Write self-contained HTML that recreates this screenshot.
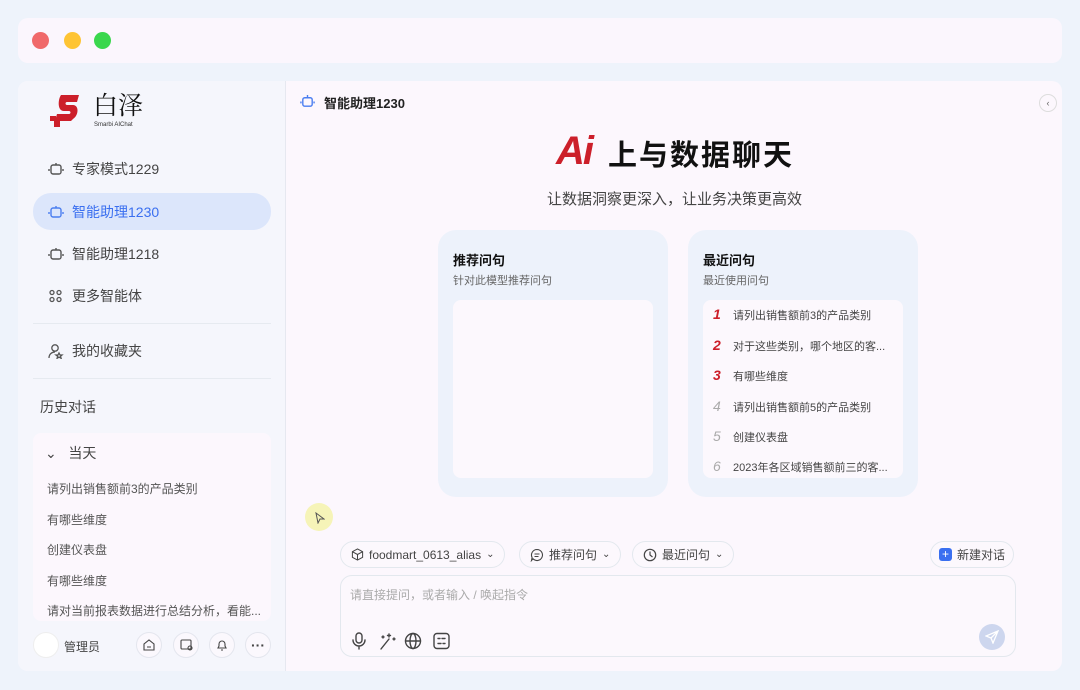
<!DOCTYPE html><html><head><meta charset="utf-8"><style>
*{box-sizing:border-box;margin:0;padding:0}
body{width:1080px;height:690px;background:#eef3fb;font-family:"Liberation Sans","Noto Sans CJK SC",sans-serif;position:relative;overflow:hidden;color:#333}
.abs{position:absolute}
.top{left:18px;top:18px;width:1044px;height:45px;background:#fbf6fd;border-radius:10px}
.dot{width:17px;height:17px;border-radius:50%;top:14px}
.win{left:18px;top:81px;width:1044px;height:590px;background:#fcf7fd;border-radius:10px;overflow:hidden}
.side{left:0;top:0;width:268px;height:590px;background:#f5f6fc;border-right:1px solid #e6e8f0}
.nav{left:15px;width:238px;height:37px;border-radius:18px;font-size:14px;color:#444;display:flex;align-items:center;padding-left:15px}
.nav svg{margin-right:8px}
.sep{left:15px;width:238px;height:1px;background:#e6eaf0}
.hist{left:15px;top:352px;width:238px;height:188px;background:#fcf7fd;border-radius:8px}
.hi{left:14px;font-size:12px;color:#555}
.ib{width:26px;height:26px;border-radius:50%;border:1px solid #e4e6ee;background:#fbf8fd;top:551px;display:flex;align-items:center;justify-content:center}
.card{top:149px;width:230px;height:267px;border-radius:18px;background:#edf2fb}
.card h3{position:absolute;left:15px;top:20px;font-size:13px;color:#111}
.card p{position:absolute;left:15px;top:42px;font-size:11px;color:#666}
.inner{left:15px;top:70px;width:200px;background:#fcf8fd;border-radius:8px}
.q{left:10px;font-size:11px;color:#444;white-space:nowrap}
.q i{display:inline-block;width:20px;font-style:italic;font-weight:bold;font-size:14px;color:#cc1f2a}
.q i.g{color:#aaa;font-weight:normal}
.pill{top:460px;height:27px;border:1px solid #e3e8ee;border-radius:14px;background:#fcf8fd;font-size:12px;color:#444;display:flex;align-items:center;padding:0 10px;gap:5px}
</style></head><body>
<div class="abs top">
<div class="abs dot" style="left:14px;background:#f0696a"></div>
<div class="abs dot" style="left:46px;background:#fec434"></div>
<div class="abs dot" style="left:76px;background:#3ad74d"></div>
</div>
<div class="abs win">
<div class="abs side">
 <div class="abs" style="left:30px;top:11px;width:42px;height:38px">
  <svg width="42" height="38" viewBox="0 0 40 38"><path d="M12 3h18l-2 7H18c-2 0-2 3 0 3h6c6 0 6 10 0 14l-2 2H6l2-7h12c2 0 2-3 0-3h-5c-7 0-6-12-3-16z" fill="#cc1f2a"/><rect x="1" y="24" width="6" height="5" fill="#cc1f2a"/><rect x="5" y="29" width="6" height="6" fill="#cc1f2a"/></svg>
 </div>
 <div class="abs" style="left:75px;top:8px;font-size:25px;color:#111;font-family:'Noto Serif CJK SC',serif;line-height:30px">白泽</div>
 <div class="abs" style="left:76px;top:41px;font-size:6px;color:#333">Smarbi AIChat</div>
 <div class="abs nav" style="top:69px"><svg width="16" height="14" viewBox="0 0 16 14" fill="none" stroke="#555" stroke-width="1.4"><rect x="3" y="3" width="10" height="9" rx="2"/><path d="M1 7v2M15 7v2M8 1v2"/></svg>专家模式1229</div>
 <div class="abs nav" style="top:112px;background:#dce6fb;color:#3a6ff0"><svg width="16" height="14" viewBox="0 0 16 14" fill="none" stroke="#4a7ef0" stroke-width="1.4"><rect x="3" y="3" width="10" height="9" rx="2"/><path d="M1 7v2M15 7v2M8 1v2"/></svg>智能助理1230</div>
 <div class="abs nav" style="top:154px"><svg width="16" height="14" viewBox="0 0 16 14" fill="none" stroke="#555" stroke-width="1.4"><rect x="3" y="3" width="10" height="9" rx="2"/><path d="M1 7v2M15 7v2M8 1v2"/></svg>智能助理1218</div>
 <div class="abs nav" style="top:196px"><svg width="16" height="14" viewBox="0 0 16 14" fill="none" stroke="#555" stroke-width="1.3"><circle cx="4" cy="3.5" r="2"/><circle cx="11" cy="3.5" r="2"/><circle cx="4" cy="10.5" r="2"/><circle cx="11" cy="10.5" r="2"/></svg>更多智能体</div>
 <div class="abs sep" style="top:242px"></div>
 <div class="abs nav" style="top:251px"><svg width="16" height="16" viewBox="0 0 16 16" fill="none" stroke="#555" stroke-width="1.3"><circle cx="7" cy="5" r="3.2"/><path d="M1 15c0-4 3-6 6-6M11 10l1 2h2l-1.5 1.3.6 2-2-1.2-2 1.2.6-2L8 12h2z"/></svg>我的收藏夹</div>
 <div class="abs sep" style="top:297px"></div>
 <div class="abs" style="left:22px;top:316px;font-size:14px;color:#444">历史对话</div>
 <div class="abs hist">
  <div class="abs" style="left:12px;top:10px;font-size:14px;color:#444">⌄&nbsp;&nbsp; 当天</div>
  <div class="abs hi" style="top:47px">请列出销售额前3的产品类别</div>
  <div class="abs hi" style="top:78px">有哪些维度</div>
  <div class="abs hi" style="top:108px">创建仪表盘</div>
  <div class="abs hi" style="top:139px">有哪些维度</div>
  <div class="abs hi" style="top:169px">请对当前报表数据进行总结分析，看能...</div>
 </div>
 <div class="abs" style="left:15px;top:551px;width:26px;height:26px;border-radius:50%;background:#fff;border:1px solid #eee"></div>
 <div class="abs" style="left:46px;top:557px;font-size:12px;color:#444">管理员</div>
 <div class="abs ib" style="left:118px"><svg width="12" height="12" viewBox="0 0 12 12" fill="none" stroke="#444" stroke-width="1.1"><path d="M1 11V5l5-4 5 4v6zM4 8h4"/></svg></div>
 <div class="abs ib" style="left:155px"><svg width="13" height="12" viewBox="0 0 13 12" fill="none" stroke="#444" stroke-width="1.1"><rect x="1" y="1" width="10" height="9" rx="1"/><circle cx="10" cy="9" r="2"/></svg></div>
 <div class="abs ib" style="left:191px"><svg width="12" height="12" viewBox="0 0 12 12" fill="none" stroke="#444" stroke-width="1.1"><path d="M2 9h8L9 7V5a3 3 0 0 0-6 0v2zM5 11h2"/></svg></div>
 <div class="abs ib" style="left:227px;font-size:14px;font-weight:bold;color:#444">···</div>
</div>
<div class="abs" style="left:282px;top:13px"><svg width="15" height="15" viewBox="0 0 16 16" fill="none" stroke="#4a7ef0" stroke-width="1.5"><rect x="3" y="4" width="10" height="9" rx="2"/><path d="M1 8v2M15 8v2M8 1v3"/></svg></div>
<div class="abs" style="left:306px;top:12px;font-size:13px;font-weight:bold;color:#222">智能助理1230</div>
<div class="abs" style="left:1021px;top:13px;width:18px;height:18px;border-radius:50%;border:1px solid #ddd;font-size:9px;text-align:center;line-height:16px;color:#666">‹</div>
<div class="abs" style="left:538px;top:47px;font-size:40px;font-weight:bold;font-style:italic;color:#cc1f2a;letter-spacing:-2px;line-height:46px">Ai</div>
<div class="abs" style="left:590px;top:55px;font-size:29px;font-weight:bold;color:#111;letter-spacing:2px;line-height:40px">上与数据聊天</div>
<div class="abs" style="left:529px;top:107px;font-size:15px;color:#444">让数据洞察更深入，让业务决策更高效</div>
<div class="abs card" style="left:420px"><h3>推荐问句</h3><p>针对此模型推荐问句</p><div class="abs inner" style="height:178px"></div></div>
<div class="abs card" style="left:670px"><h3>最近问句</h3><p>最近使用问句</p>
 <div class="abs inner" style="height:178px">
  <div class="abs q" style="top:6px"><i>1</i>请列出销售额前3的产品类别</div>
  <div class="abs q" style="top:37px"><i>2</i>对于这些类别，哪个地区的客...</div>
  <div class="abs q" style="top:67px"><i>3</i>有哪些维度</div>
  <div class="abs q" style="top:98px"><i class="g">4</i>请列出销售额前5的产品类别</div>
  <div class="abs q" style="top:128px"><i class="g">5</i>创建仪表盘</div>
  <div class="abs q" style="top:158px"><i class="g">6</i>2023年各区域销售额前三的客...</div>
 </div></div>
<div class="abs" style="left:287px;top:422px;width:28px;height:28px;border-radius:50%;background:#f6f4b8"></div>
<div class="abs" style="left:297px;top:430px"><svg width="10" height="12" viewBox="0 0 10 12" fill="none" stroke="#555" stroke-width="1"><path d="M1 1l8 6H5l-2 4z"/></svg></div>
<div class="abs pill" style="left:322px"><svg width="13" height="13" viewBox="0 0 14 14" fill="none" stroke="#444" stroke-width="1.1"><path d="M7 1l5.5 3v6L7 13 1.5 10V4zM1.5 4L7 7l5.5-3M7 7v6"/></svg>foodmart_0613_alias <span style="font-size:10px">⌄</span></div>
<div class="abs pill" style="left:501px"><svg width="14" height="14" viewBox="0 0 14 14" fill="none" stroke="#444" stroke-width="1.1"><path d="M7 1.5a5.5 5.5 0 1 1-4 9.3L1.5 12.5l.6-3A5.5 5.5 0 0 1 7 1.5zM4.5 6h5M4.5 8.5h4"/></svg>推荐问句 <span style="font-size:10px">⌄</span></div>
<div class="abs pill" style="left:614px"><svg width="14" height="14" viewBox="0 0 14 14" fill="none" stroke="#444" stroke-width="1.2"><circle cx="7" cy="7" r="5.7"/><path d="M7 3.5V7l2.5 2"/></svg>最近问句 <span style="font-size:10px">⌄</span></div>
<div class="abs pill" style="left:912px;padding:0 8px"><span style="display:inline-block;width:13px;height:13px;background:#3a6ff0;border-radius:3px;color:#fff;font-size:12px;line-height:13px;text-align:center">+</span>新建对话</div>
<div class="abs" style="left:322px;top:494px;width:676px;height:82px;border:1px solid #e3e8ee;border-radius:12px;background:#fcf8fd">
 <div class="abs" style="left:9px;top:10px;font-size:12px;color:#aaa">请直接提问，或者输入 / 唤起指令</div>
 <svg class="abs" style="left:10px;top:56px" width="112" height="18" viewBox="0 0 112 18" fill="none" stroke="#444" stroke-width="1.4" stroke-linecap="round">
  <rect x="5" y="1" width="6" height="10" rx="3"/><path d="M2 8a6 6 0 0 0 12 0M8 14v3"/>
  <path d="M30 17l8-10M38 2v3M36.5 3.5h3M43 6v2M42 7h2M32 4v2M31 5h2"/>
  <circle cx="62" cy="9" r="7.5"/><ellipse cx="62" cy="9" rx="3" ry="7.5"/><path d="M54.5 9h15"/>
  <rect x="83" y="1.5" width="15" height="15" rx="3"/><path d="M87 6.5h2M91 6.5h3M87 11.5h3M92 11.5h2"/>
 </svg>
 <div class="abs" style="left:638px;top:48px;width:26px;height:26px;border-radius:50%;background:#cdd6ee"><svg class="abs" style="left:6px;top:6px" width="14" height="14" viewBox="0 0 14 14" fill="none" stroke="#fff" stroke-width="1.3"><path d="M13 1L1 6l5 2 2 5zM6 8l7-7"/></svg></div>
</div>
</div>
</body></html>
